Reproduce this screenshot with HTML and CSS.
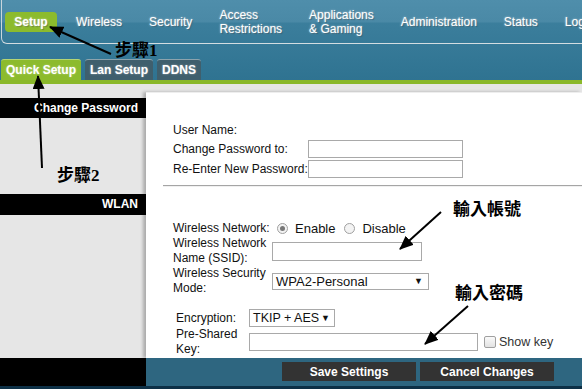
FILE: index.html
```html
<!DOCTYPE html>
<html lang="zh-Hant">
<head>
  <meta charset="UTF-8" />
  <meta name="viewport" content="width=device-width, initial-scale=1.0">
  <title>Setup - Quick Setup</title>
  <link rel="stylesheet" href="styles.css">
</head>
<body>

  <div class="header">
    <nav class="topnav">
      <a class="menu active">Setup</a>
      <a class="menu">Wireless</a>
      <a class="menu">Security</a>
      <a class="menu">Access<br>Restrictions</a>
      <a class="menu">Applications<br>&amp; Gaming</a>
      <a class="menu">Administration</a>
      <a class="menu">Status</a>
      <a class="menu">Logout</a>
    </nav>
    <div class="subnav">
      <a class="tab active">Quick Setup</a>
      <a class="tab">Lan Setup</a>
      <a class="tab">DDNS</a>
    </div>
  </div>

  <div class="main">
    <aside class="sidebar">
      <div class="side-title">Change Password</div>
      <div class="side-title wlan-title">WLAN</div>
    </aside>

    <section class="content">
      <div class="grid pass-grid">
        <label>User Name:</label>
        <span></span>
        <label for="pass1">Change Password to:</label>
        <input id="pass1" type="password" />
        <label for="pass2">Re-Enter New Password:</label>
        <input id="pass2" type="password" />
      </div>

      <hr class="divider">

      <div class="grid wlan-grid">
        <label>Wireless Network:</label>
        <div class="radios">
          <span class="radio checked"></span><span class="radio-text">Enable</span>
          <span class="radio"></span><span class="radio-text">Disable</span>
        </div>
        <label for="ssid">Wireless Network<br>Name (SSID):</label>
        <input id="ssid" class="ssid" type="text" />
        <label>Wireless Security<br>Mode:</label>
        <div class="select mode-select">WPA2-Personal<span class="caret">▼</span></div>
      </div>

      <div class="grid enc-grid">
        <label>Encryption:</label>
        <div class="select enc-select">TKIP + AES<span class="caret">▼</span></div>
        <label for="psk">Pre-Shared<br>Key:</label>
        <div class="psk-row">
          <input id="psk" class="psk" type="password" />
          <span class="checkbox"></span>
          <span class="check-text">Show key</span>
        </div>
      </div>
    </section>
  </div>

  <div class="footer">
    <div class="footer-left"></div>
    <div class="footer-right">
      <button class="btn">Save Settings</button>
      <button class="btn">Cancel Changes</button>
    </div>
  </div>

  <!-- annotations drawn over the screenshot -->
  <div class="notes">
    <svg class="arrows" width="582" height="389" viewBox="0 0 582 389">
      <defs>
        <marker id="head" markerWidth="14" markerHeight="12" refX="13" refY="6" orient="auto" markerUnits="userSpaceOnUse">
          <path d="M0,0 L14,6 L0,12 Z" fill="#000" />
        </marker>
      </defs>
      <line x1="111" y1="54" x2="50" y2="27" stroke="#000" stroke-width="2" marker-end="url(#head)" />
      <line x1="42" y1="168" x2="38" y2="76" stroke="#000" stroke-width="2" marker-end="url(#head)" />
      <line x1="441" y1="212" x2="400" y2="249" stroke="#000" stroke-width="2" marker-end="url(#head)" />
      <line x1="468" y1="306" x2="425" y2="344" stroke="#000" stroke-width="2" marker-end="url(#head)" />
    </svg>
    <span class="note note-1">步驟1</span>
    <span class="note note-2">步驟2</span>
    <span class="note note-3">輸入帳號</span>
    <span class="note note-4">輸入密碼</span>
  </div>

</body>
</html>
```

FILE: styles.css
```css
body {
  margin: 0;
  width: 582px;
  height: 389px;
  overflow: hidden;
  position: relative;
  font-family: "Liberation Sans", Arial, sans-serif;
  font-size: 12px;
  color: #111;
  background: #e6e6e6;
}

.header {
  background: linear-gradient(#4f8eab 0, #4a89a6 22px, #3b7e9c 23px, #2f7391 80px);
}

.topnav {
  height: 43px;
  margin-left: 1px;
  border-left: 1px solid #c9d6dc;
  border-bottom: 1px solid #d4dde1;
  border-bottom-left-radius: 6px;
  display: flex;
  align-items: center;
  gap: 27px;
  white-space: nowrap;
  overflow: hidden;
}

.menu {
  flex: none;
  color: #fff;
  line-height: 14px;
  text-shadow: 0 0 2px rgba(255, 255, 255, 0.7), 1px 1px 1px rgba(0, 0, 0, 0.35);
}

.menu.active {
  margin-left: 3px;
  margin-right: -8px;
  margin-top: 1px;
  width: 52px;
  height: 20px;
  line-height: 20px;
  text-align: center;
  font-weight: bold;
  background: #8cbb2d;
  border-radius: 4px;
}

.subnav {
  height: 36px;
  display: flex;
  align-items: flex-end;
  gap: 4px;
  padding-left: 1px;
  border-bottom: 4px solid #8ab82a;
}

.tab {
  height: 20px;
  line-height: 21px;
  padding: 0 5px;
  color: #fff;
  font-weight: bold;
  background: #3f5f6d;
  border-top: 1px solid #8ca3ad;
  border-radius: 3px 3px 0 0;
  text-shadow: 0 0 2px rgba(255, 255, 255, 0.5);
}

.tab.active {
  background: #8cbb2d;
  border-top-color: #b5d574;
}

.main {
  display: flex;
  height: 274px;
}

.sidebar {
  width: 146px;
  flex: none;
  padding-top: 14px;
}

.side-title {
  height: 20px;
  line-height: 20px;
  padding-right: 8px;
  text-align: right;
  background: #000;
  color: #fff;
  font-weight: bold;
}

.wlan-title {
  margin-top: 76px;
  height: 21px;
}

.content {
  flex: 1;
  margin-top: 8px;
  background: #fff;
  border-top: 1px solid #eee;
  box-shadow: -3px 0 3px rgba(0, 0, 0, 0.25);
  padding: 29px 0 0 27px;
  overflow: hidden;
}

.grid {
  display: grid;
  align-items: center;
}

.grid label {
  line-height: 15px;
}

.grid input {
  box-sizing: border-box;
  border: 1px solid #a9a9a9;
  margin: 0;
  padding: 0 3px;
  font-size: 12px;
}

.pass-grid {
  grid-template-columns: 135px 155px;
  grid-template-rows: 16px 18px 18px;
  row-gap: 2px;
}

.pass-grid input {
  height: 18px;
}

.divider {
  margin: 7px 0 0 -10px;
  border: 0;
  border-top: 1px solid #a5a5a5;
  border-bottom: 1px solid #f0f0f0;
}

.wlan-grid {
  margin-top: 34px;
  grid-template-columns: 99px auto;
  grid-template-rows: 15px 30px 30px;
}

.radios {
  display: flex;
  align-items: center;
  font-size: 13px;
  padding-left: 5px;
}

.radio {
  flex: none;
  width: 9px;
  height: 9px;
  border: 1px solid #a0a0a0;
  border-radius: 50%;
  background: #f3f3f3;
  position: relative;
  margin-right: 7px;
}

.radio.checked::after {
  content: "";
  position: absolute;
  left: 2px;
  top: 2px;
  width: 5px;
  height: 5px;
  border-radius: 50%;
  background: #777;
}

.radio-text {
  margin-right: 9px;
}

.ssid {
  width: 150px;
  height: 19px;
}

.select {
  box-sizing: border-box;
  height: 17px;
  line-height: 15px;
  border: 1px solid #a9a9a9;
  padding-left: 3px;
  font-size: 13px;
  white-space: nowrap;
  display: flex;
  justify-content: space-between;
}

.caret {
  font-size: 9px;
  padding-right: 5px;
}

.mode-select {
  width: 157px;
}

.enc-grid {
  margin: 13px 0 0 3px;
  grid-template-columns: 73px auto;
  grid-template-rows: 18px 30px;
}

.enc-select {
  width: 86px;
  height: 18px;
  line-height: 16px;
  font-size: 12.5px;
}

.enc-select .caret {
  padding-right: 4px;
}

.psk-row {
  display: flex;
  align-items: center;
}

.psk {
  flex: none;
  width: 229px;
  height: 18px;
}

.checkbox {
  flex: none;
  box-sizing: border-box;
  width: 12px;
  height: 12px;
  margin-left: 6px;
  border: 1px solid #a0a0a0;
  border-radius: 2px;
  background: linear-gradient(#fafafa, #e2e2e2);
}

.check-text {
  margin-left: 3px;
  font-size: 12.5px;
  color: #333;
  white-space: nowrap;
}

.footer {
  display: flex;
  height: 28px;
  border-bottom: 3px solid #0d3046;
}

.footer-left {
  width: 146px;
  background: #000;
}

.footer-right {
  flex: 1;
  background: #2e6680;
  display: flex;
  justify-content: flex-end;
  align-items: flex-start;
  gap: 4px;
  padding: 4px 28px 0 0;
}

.btn {
  width: 134px;
  height: 19px;
  padding: 0;
  border: none;
  background: #333;
  color: #fff;
  font-family: "Liberation Sans", Arial, sans-serif;
  font-size: 12px;
  font-weight: bold;
}

.notes {
  position: absolute;
  left: 0;
  top: 0;
  width: 582px;
  height: 389px;
  pointer-events: none;
}

.arrows {
  position: absolute;
  left: 0;
  top: 0;
}

.note {
  position: absolute;
  font-family: "Liberation Serif", "Noto Sans CJK TC", serif;
  font-size: 17px;
  font-weight: bold;
  line-height: 17px;
  color: #000;
}

.note-1 { left: 115px; top: 42px; }
.note-2 { left: 57px; top: 167px; }
.note-3 { left: 453px; top: 201px; }
.note-4 { left: 455px; top: 285px; }
```
